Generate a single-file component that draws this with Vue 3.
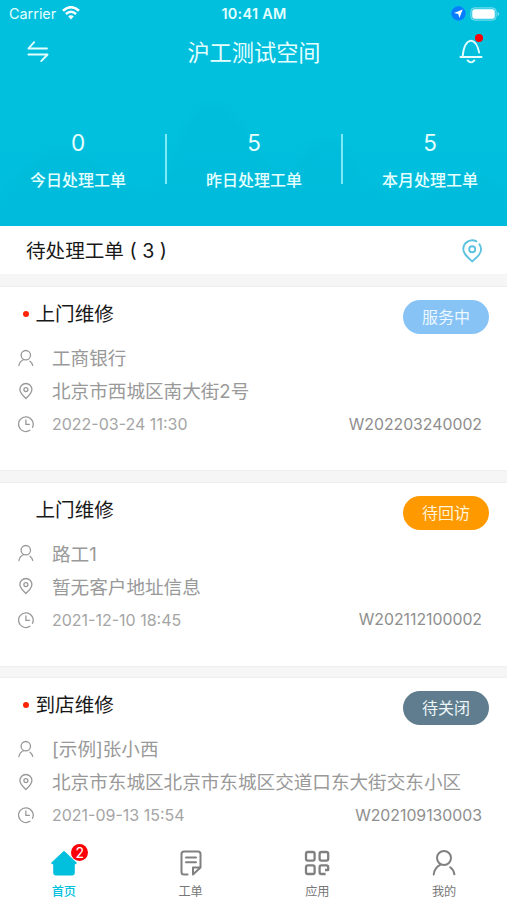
<script setup>
const stats = [
  { value: 0, label: '今日处理工单' },
  { value: 5, label: '昨日处理工单' },
  { value: 5, label: '本月处理工单' },
]
const orders = [
  { title: '上门维修', unread: true, status: '服务中', tone: 'serving', customer: '工商银行', address: '北京市西城区南大街2号', time: '2022-03-24 11:30', code: 'W202203240002' },
  { title: '上门维修', unread: false, status: '待回访', tone: 'visit', customer: '路工1', address: '暂无客户地址信息', time: '2021-12-10 18:45', code: 'W202112100002' },
  { title: '到店维修', unread: true, status: '待关闭', tone: 'closing', customer: '[示例]张小西', address: '北京市东城区北京市东城区交道口东大街交东小区', time: '2021-09-13 15:54', code: 'W202109130003' },
]
</script>

<template>
  <div class="screen">
    <header class="hero">
      <svg class="hills" width="507" height="146" viewBox="0 0 507 146">
        <path d="M0 118Q40 68 62 70T130 112Q165 120 178 66 195 22 213 24 232 26 250 58 268 100 296 88 312 60 330 60 350 64 362 104 400 126 440 108 480 90 507 112V146H0Z" fill="#00b9da" fill-opacity=".5" />
      </svg>
      <div class="status">
        <div class="status-side">
          <span class="carrier">Carrier</span>
          <svg class="wifi" width="18" height="14" viewBox="0 0 18 14" fill="none" stroke="#fff">
            <path d="M1 4.8Q9-2.4 17 4.8" stroke-width="2.5" />
            <path d="M3.9 8Q9 3.4 14.1 8" stroke-width="2.4" />
            <path d="M6.2 10.3Q9 8 11.8 10.3L9 13.4Z" fill="#fff" stroke="none" />
          </svg>
        </div>
        <span class="clock">10:41 AM</span>
        <div class="status-side end">
          <svg width="15" height="15" viewBox="0 0 15 15">
            <circle cx="7.5" cy="7.5" r="7.2" fill="#087cff" />
            <path d="M11.7 3.5 8.4 12 7.3 8.1 3 7.1Z" fill="#fff" />
          </svg>
          <svg width="30" height="14" viewBox="0 0 30 14">
            <rect x=".7" y=".7" width="25.6" height="12.6" rx="4" fill="#fff" fill-opacity=".2" stroke="#fff" stroke-opacity=".35" />
            <rect x="2.3" y="2.3" width="22.4" height="9.4" rx="2.6" fill="#fff" />
            <path d="M27.6 5v4q1.6-.7 1.6-2t-1.6-2" fill="#fff" fill-opacity=".5" />
          </svg>
        </div>
      </div>
      <div class="navbar">
        <svg class="swap" width="24" height="24" viewBox="0 0 24 24" fill="none" stroke="#e5ffff" stroke-width="1.8" stroke-linejoin="round" stroke-linecap="round">
          <path d="M21 9.5H2.4L8.200 3.100M2.400 15.500h19.200l-6.400 6.600" />
        </svg>
        <h1>沪工测试空间</h1>
        <div class="bell">
          <svg width="24" height="26" viewBox="0 0 24 26" fill="none" stroke="#e5ffff" stroke-width="1.9" stroke-linecap="round">
            <path d="M1.4 19h21.2M3.6 18.6C4.4 9.7 7 3.4 12 2.6c4.3.5 6.800 5.2 8.200 12M8.6 22.400q3.400 4 6.800 0" />
          </svg>
          <i class="dot"></i>
        </div>
      </div>
      <div class="stats">
        <div v-for="s in stats" :key="s.label" class="stat">
          <span class="num">{{ s.value }}</span>
          <span class="label">{{ s.label }}</span>
        </div>
      </div>
    </header>

    <section class="heading">
      <h2>待处理工单 ( 3 )</h2>
      <svg width="22" height="24" viewBox="0 0 22 24" fill="none" stroke="#5cc2e0" stroke-width="1.9" stroke-linecap="round">
        <path d="M15.4 2.3A9 8.9 0 0 0 2.3 10.2c0 4.2 3.1 7.2 8.9 12.2 5.7-5 8.9-8 8.9-12.2a8.9 8.9 0 0 0-1.7-5" />
        <circle cx="11.2" cy="10.3" r="3" />
      </svg>
    </section>

    <main class="list">
      <article v-for="o in orders" :key="o.code" class="card">
        <div class="card-head">
          <i class="mark" :class="{ on: o.unread }"></i>
          <h3>{{ o.title }}</h3>
          <span class="pill" :class="o.tone">{{ o.status }}</span>
        </div>
        <div class="row">
          <svg width="16" height="18" viewBox="0 0 16 18" fill="none" stroke="#999" stroke-width="1.3" stroke-linecap="round">
            <circle cx="7.8" cy="6.2" r="4.7" />
            <path d="M.9 16.500Q1.600 12.300 5.800 10.500M12 12.200q2.200 1.700 2.700 4.200" />
          </svg>
          <span class="text">{{ o.customer }}</span>
        </div>
        <div class="row">
          <svg width="16" height="18" viewBox="0 0 16 18" fill="none" stroke="#999" stroke-width="1.3">
            <path d="M7.900 16.500C3.900 12.800 1.900 10.600 1.900 7.500a6 6 0 0 1 12 0c0 3.100-2 5.300-6 9Z" />
            <circle cx="7.9" cy="7.6" r="2" />
          </svg>
          <span class="text">{{ o.address }}</span>
        </div>
        <div class="row">
          <svg width="16" height="18" viewBox="0 0 16 18" fill="none" stroke="#999" stroke-width="1.3" stroke-linecap="round">
            <path d="M14.500 12.300a7.300 7.300 0 1 0-2.600 3M7.900 5v4.300h3.600" />
          </svg>
          <time>{{ o.time }}</time>
          <span class="code">{{ o.code }}</span>
        </div>
      </article>
    </main>

    <nav class="tabs">
      <a class="tab active">
        <span class="tab-icon">
          <svg width="28" height="28" viewBox="0 0 28 28" fill="#00c0de" stroke="#00c0de" stroke-width="1.6" stroke-linejoin="round">
            <path d="M14 2.800 26 14 24 15v9q0 1.600-1.600 1.600h-16.800Q4 25.600 4 24V15l-2-1Z" />
          </svg>
          <b class="badge">2</b>
        </span>
        <span>首页</span>
      </a>
      <a class="tab">
        <span class="tab-icon">
          <svg width="28" height="28" viewBox="0 0 28 28" fill="none" stroke="#808080" stroke-width="2" stroke-linecap="round" stroke-linejoin="round">
            <path d="M10.500 25.500H7q-2.500 0-2.500-2.500V5Q4.500 2.500 7 2.500h14q2.500 0 2.500 2.500v13.500l-7.500 7V18.500h7M9 8.600h10M9 13.300h10" />
          </svg>
        </span>
        <span>工单</span>
      </a>
      <a class="tab">
        <span class="tab-icon">
          <svg width="28" height="28" viewBox="0 0 28 28" fill="none" stroke="#808080" stroke-width="2.3" stroke-linejoin="round">
            <rect x="3" y="3" width="8.6" height="8.6" rx="1.8" />
            <rect x="16.6" y="3" width="8.6" height="8.6" rx="1.8" />
            <rect x="3" y="16.4" width="8.6" height="8.6" rx="1.8" />
            <path d="M22.600 25h-4.200q-1.800 0-1.800-1.800v-5q0-1.800 1.800-1.800h5q1.800 0 1.800 1.800V21h-3.200" />
          </svg>
        </span>
        <span>应用</span>
      </a>
      <a class="tab">
        <span class="tab-icon">
          <svg width="28" height="28" viewBox="0 0 28 28" fill="none" stroke="#808080" stroke-width="2" stroke-linecap="round">
            <circle cx="14" cy="9" r="7" />
            <path d="M3.700 25.500Q4.400 18.700 10.200 15.800M20.200 18.200q3.700 2.700 4.200 7.100" />
          </svg>
        </span>
        <span>我的</span>
      </a>
    </nav>
  </div>
</template>

<style>
body { margin: 0; }
</style>

<style scoped>
.screen {
  width: 507px;
  height: 900px;
  display: flex;
  flex-direction: column;
  overflow: hidden;
  background: #f6f6f6;
  font-family: Inter, "Noto Sans CJK SC", sans-serif;
}
svg { display: block; flex: none; }
h1, h2, h3 { margin: 0; font-weight: 400; }
.hero {
  position: relative;
  z-index: 0;
  flex: none;
  height: 226px;
  overflow: hidden;
  color: #e5ffff;
  background: linear-gradient(#00c0de 60%, #00bcdd);
}
.hills {
  position: absolute;
  z-index: -1;
  left: 0;
  bottom: 0;
  filter: blur(3px);
}
.status {
  height: 27px;
  display: grid;
  grid-template-columns: 1fr auto 1fr;
  align-items: center;
  padding: 0 8px 0 9px;
}
.status-side { display: flex; align-items: center; gap: 6px; }
.end { justify-content: flex-end; gap: 4px; margin-right: -1px; }
.carrier { font-size: 14.4px; }
.wifi { margin-top: -1px; }
.clock { font-weight: 600; font-size: 14.4px; letter-spacing: .3px; }
.navbar {
  height: 48px;
  display: flex;
  align-items: center;
  justify-content: space-between;
  padding: 0 24px 0 26px;
}
h1 { font-size: 22.2px; line-height: 30px; padding: 3px 1px 0 0; }
.bell { position: relative; }
.dot {
  position: absolute;
  top: -4px;
  right: 0;
  width: 8px;
  height: 8px;
  border-radius: 50%;
  background: #fb0007;
}
.stats {
  display: grid;
  grid-template-columns: repeat(3, 176px);
  margin-left: -10px;
  padding-top: 59px;
}
.stat {
  height: 50px;
  display: flex;
  flex-direction: column;
  align-items: center;
}
.stat + .stat { border-left: 2px solid #7eeaf5; margin-left: -1px; padding-right: 1px; }
.num { font-size: 22.5px; line-height: 18px; }
.label { margin-top: 18px; font-size: 16px; line-height: 20px; font-weight: 500; white-space: nowrap; }
.heading {
  flex: none;
  box-sizing: border-box;
  height: 48px;
  display: flex;
  align-items: center;
  justify-content: space-between;
  padding: 2px 24px 0 26px;
  background: #fff;
  color: #181818;
}
h2 { font-size: 19.6px; line-height: 28px; }
.list {
  flex: 1;
  min-height: 0;
  overflow: hidden;
  padding-top: 13px;
}
.card {
  box-sizing: border-box;
  height: 183px;
  margin-bottom: 12.5px;
  background: #fff;
  box-shadow: 0 0 2px rgba(0, 0, 0, .1);
}
.card-head {
  height: 54px;
  display: flex;
  align-items: center;
  padding: 0 18px 0 23px;
  color: #181818;
}
.mark { width: 6px; height: 6px; margin-right: 6.5px; border-radius: 50%; }
.mark.on { background: #fc2404; }
h3 { font-size: 19.6px; line-height: 28px; }
.pill {
  margin: 6px 0 0 auto;
  width: 86px;
  height: 34px;
  border-radius: 17px;
  color: #fff;
  font-size: 16px;
  line-height: 35px;
  text-align: center;
}
.serving { background: #87c3f5; color: #edf8ff; }
.visit { background: #ff9900; color: #fff4d8; }
.closing { background: #5f7d8e; color: #edf5f8; }
.row {
  height: 33.3px;
  display: flex;
  align-items: center;
  padding: 0 25px 0 18px;
  color: #999;
  font-size: 18.6px;
  white-space: nowrap;
}
.row svg { margin-right: 18px; }
.row .text { padding-bottom: 2px; }
.row time { font-size: 16px; color: #a5a5a5; }
.row .code { margin-left: auto; font-size: 15.8px; color: #8e8e8e; }
.tabs {
  flex: none;
  height: 61px;
  display: flex;
  background: #fff;
}
.tab {
  flex: 1;
  display: flex;
  flex-direction: column;
  align-items: center;
  padding: 10px 0 0 1px;
  color: #777;
  font-size: 12.2px;
  line-height: 16px;
}
.tab.active { color: #00c0de; font-weight: 500; }
.tab-icon { position: relative; margin-bottom: 7px; }
.badge {
  position: absolute;
  top: -5px;
  left: 21.5px;
  width: 17px;
  height: 17px;
  border-radius: 50%;
  background: #fb0007;
  color: #fff;
  font-size: 14px;
  font-weight: 400;
  line-height: 17px;
  text-align: center;
}
</style>
